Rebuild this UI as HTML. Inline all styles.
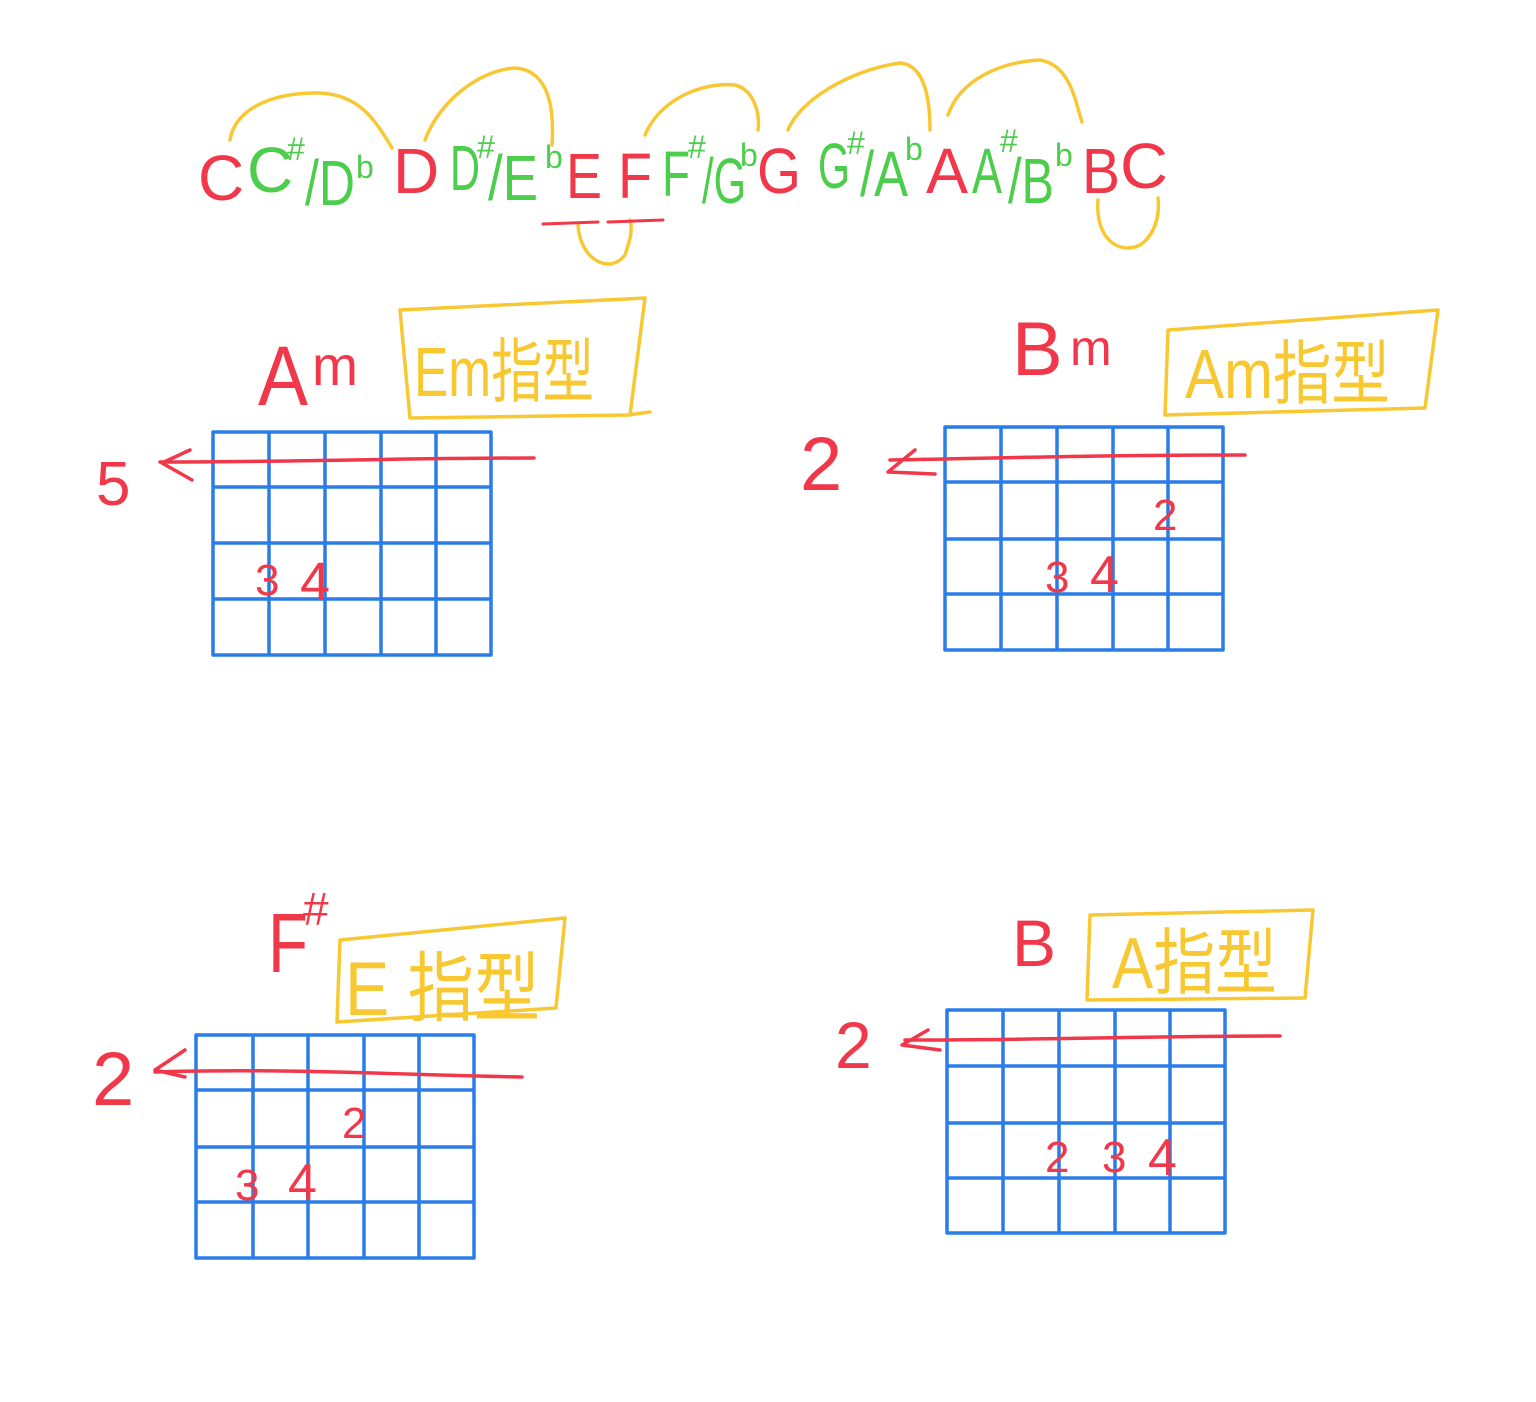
<!DOCTYPE html>
<html><head><meta charset="utf-8"><style>
html,body{margin:0;padding:0;background:#fff;}
svg{display:block}
text{font-family:"Liberation Sans","Noto Sans CJK SC",sans-serif;}
</style></head><body>
<svg width="1536" height="1402" viewBox="0 0 1536 1402" xmlns="http://www.w3.org/2000/svg">
<g fill="none" stroke-linecap="round" stroke-linejoin="round">
<g stroke="#f8c832" stroke-width="3.5">
<path d="M230 140 C235 110 270 92 320 93 C360 95 375 120 392 148"/>
<path d="M425 140 C440 100 480 70 515 68 C545 70 555 100 552 145"/>
<path d="M645 135 C660 100 700 82 735 85 C755 90 760 115 758 130"/>
<path d="M788 130 C800 100 850 70 900 63 C925 65 930 100 930 130"/>
<path d="M948 115 C960 80 1000 62 1040 60 C1070 65 1075 100 1082 122"/>
<path d="M578 225 C580 260 610 275 625 255 C630 240 633 230 630 220"/>
<path d="M1098 200 C1095 240 1120 255 1140 245 C1155 235 1160 215 1158 198"/>
<path d="M400 310 L645 298 L630 415 L410 418 Z M628 415 L650 412"/>
<path d="M1168 330 L1438 310 L1425 408 L1165 415 Z"/>
<path d="M340 940 L565 918 L556 1008 L337 1022 Z"/>
<path d="M1090 915 L1313 910 L1305 998 L1087 1000 Z"/>
</g>
<g stroke="#f0384a" stroke-width="3">
<path d="M543 224 L598 222"/><path d="M608 222 L663 220"/>
</g>
<g stroke="#2a7ce8" stroke-width="3.5">
<path d="M213 432 H491 M213 487 H491 M213 543 H491 M213 599 H491 M213 655 H491 M213 432 V655 M269 432 V655 M325 432 V655 M381 432 V655 M436 432 V655 M491 432 V655"/>
<path d="M945 427 H1223 M945 482 H1223 M945 539 H1223 M945 594 H1223 M945 650 H1223 M945 427 V650 M1001 427 V650 M1057 427 V650 M1113 427 V650 M1168 427 V650 M1223 427 V650"/>
<path d="M196 1035 H474 M196 1090 H474 M196 1147 H474 M196 1202 H474 M196 1258 H474 M196 1035 V1258 M253 1035 V1258 M308 1035 V1258 M364 1035 V1258 M419 1035 V1258 M474 1035 V1258"/>
<path d="M947 1010 H1225 M947 1066 H1225 M947 1123 H1225 M947 1178 H1225 M947 1233 H1225 M947 1010 V1233 M1003 1010 V1233 M1059 1010 V1233 M1115 1010 V1233 M1170 1010 V1233 M1225 1010 V1233"/>
</g>
<g stroke="#f0384a" stroke-width="3.5">
<path d="M160 462 C300 462 400 458 534 458"/><path d="M190 450 L162 463 L192 480"/>
<path d="M890 460 C1000 458 1100 455 1245 455"/><path d="M915 450 L888 472 L935 474"/>
<path d="M155 1072 C300 1068 400 1075 522 1077"/><path d="M185 1050 L155 1070 L185 1077"/>
<path d="M905 1040 C1050 1040 1150 1036 1280 1036"/><path d="M928 1030 L902 1045 L940 1050"/>
</g>
</g>
<g font-size="64">
<text x="198" y="200" fill="#f0384a">C</text>
<text x="247" y="192" fill="#4ccd4c">C</text>
<text x="287" y="160" fill="#4ccd4c" font-size="32">#</text>
<text x="305" y="205" fill="#4ccd4c" textLength="50" lengthAdjust="spacingAndGlyphs">/D</text>
<text x="356" y="178" fill="#4ccd4c" font-size="32">b</text>
<text x="393" y="193" fill="#f0384a">D</text>
<text x="450" y="190" fill="#4ccd4c" textLength="30" lengthAdjust="spacingAndGlyphs">D</text>
<text x="477" y="158" fill="#4ccd4c" font-size="32">#</text>
<text x="488" y="200" fill="#4ccd4c" textLength="50" lengthAdjust="spacingAndGlyphs">/E</text>
<text x="545" y="168" fill="#4ccd4c" font-size="32">b</text>
<text x="566" y="198" fill="#f0384a" textLength="36" lengthAdjust="spacingAndGlyphs">E</text>
<text x="618" y="198" fill="#f0384a" textLength="34" lengthAdjust="spacingAndGlyphs">F</text>
<text x="662" y="196" fill="#4ccd4c" textLength="28" lengthAdjust="spacingAndGlyphs">F</text>
<text x="688" y="158" fill="#4ccd4c" font-size="32">#</text>
<text x="702" y="203" fill="#4ccd4c" textLength="44" lengthAdjust="spacingAndGlyphs">/G</text>
<text x="740" y="166" fill="#4ccd4c" font-size="32">b</text>
<text x="757" y="193" fill="#f0384a" textLength="44" lengthAdjust="spacingAndGlyphs">G</text>
<text x="818" y="188" fill="#4ccd4c" textLength="32" lengthAdjust="spacingAndGlyphs">G</text>
<text x="847" y="154" fill="#4ccd4c" font-size="32">#</text>
<text x="860" y="196" fill="#4ccd4c" textLength="48" lengthAdjust="spacingAndGlyphs">/A</text>
<text x="905" y="160" fill="#4ccd4c" font-size="32">b</text>
<text x="926" y="193" fill="#f0384a" textLength="42" lengthAdjust="spacingAndGlyphs">A</text>
<text x="972" y="193" fill="#4ccd4c" textLength="30" lengthAdjust="spacingAndGlyphs">A</text>
<text x="1000" y="152" fill="#4ccd4c" font-size="32">#</text>
<text x="1008" y="203" fill="#4ccd4c" textLength="46" lengthAdjust="spacingAndGlyphs">/B</text>
<text x="1055" y="166" fill="#4ccd4c" font-size="32">b</text>
<text x="1082" y="193" fill="#f0384a" textLength="38" lengthAdjust="spacingAndGlyphs">B</text>
<text x="1120" y="188" fill="#f0384a" textLength="48" lengthAdjust="spacingAndGlyphs">C</text>
</g>
<g fill="#f0384a">
<text x="258" y="405" font-size="84" textLength="50" lengthAdjust="spacingAndGlyphs">A</text><text x="312" y="385" font-size="56" textLength="46" lengthAdjust="spacingAndGlyphs">m</text>
<text x="1012" y="375" font-size="76">B</text><text x="1070" y="365" font-size="50">m</text>
<text x="268" y="972" font-size="84" textLength="40" lengthAdjust="spacingAndGlyphs">F</text><text x="303" y="925" font-size="46">#</text>
<text x="1012" y="966" font-size="66">B</text>
<text x="96" y="505" font-size="62">5</text>
<text x="800" y="490" font-size="76">2</text>
<text x="92" y="1105" font-size="76">2</text>
<text x="835" y="1068" font-size="66">2</text>
<g font-size="44">
<text x="255" y="595">3</text><text x="300" y="600" font-size="54">4</text>
<text x="1153" y="530">2</text><text x="1045" y="592">3</text><text x="1090" y="592" font-size="52">4</text>
<text x="342" y="1138">2</text><text x="235" y="1200">3</text><text x="288" y="1200" font-size="52">4</text>
<text x="1045" y="1172">2</text><text x="1102" y="1172">3</text><text x="1148" y="1175" font-size="52">4</text>
</g>
</g>
<g fill="#f8c832">
<text x="414" y="396" font-size="70" textLength="180" lengthAdjust="spacingAndGlyphs">Em指型</text>
<text x="1185" y="398" font-size="70" textLength="205" lengthAdjust="spacingAndGlyphs">Am指型</text>
<text x="345" y="1015" font-size="76" textLength="195" lengthAdjust="spacingAndGlyphs">E 指型</text>
<text x="1112" y="988" font-size="72" textLength="165" lengthAdjust="spacingAndGlyphs">A指型</text>
</g>
</svg>
</body></html>
